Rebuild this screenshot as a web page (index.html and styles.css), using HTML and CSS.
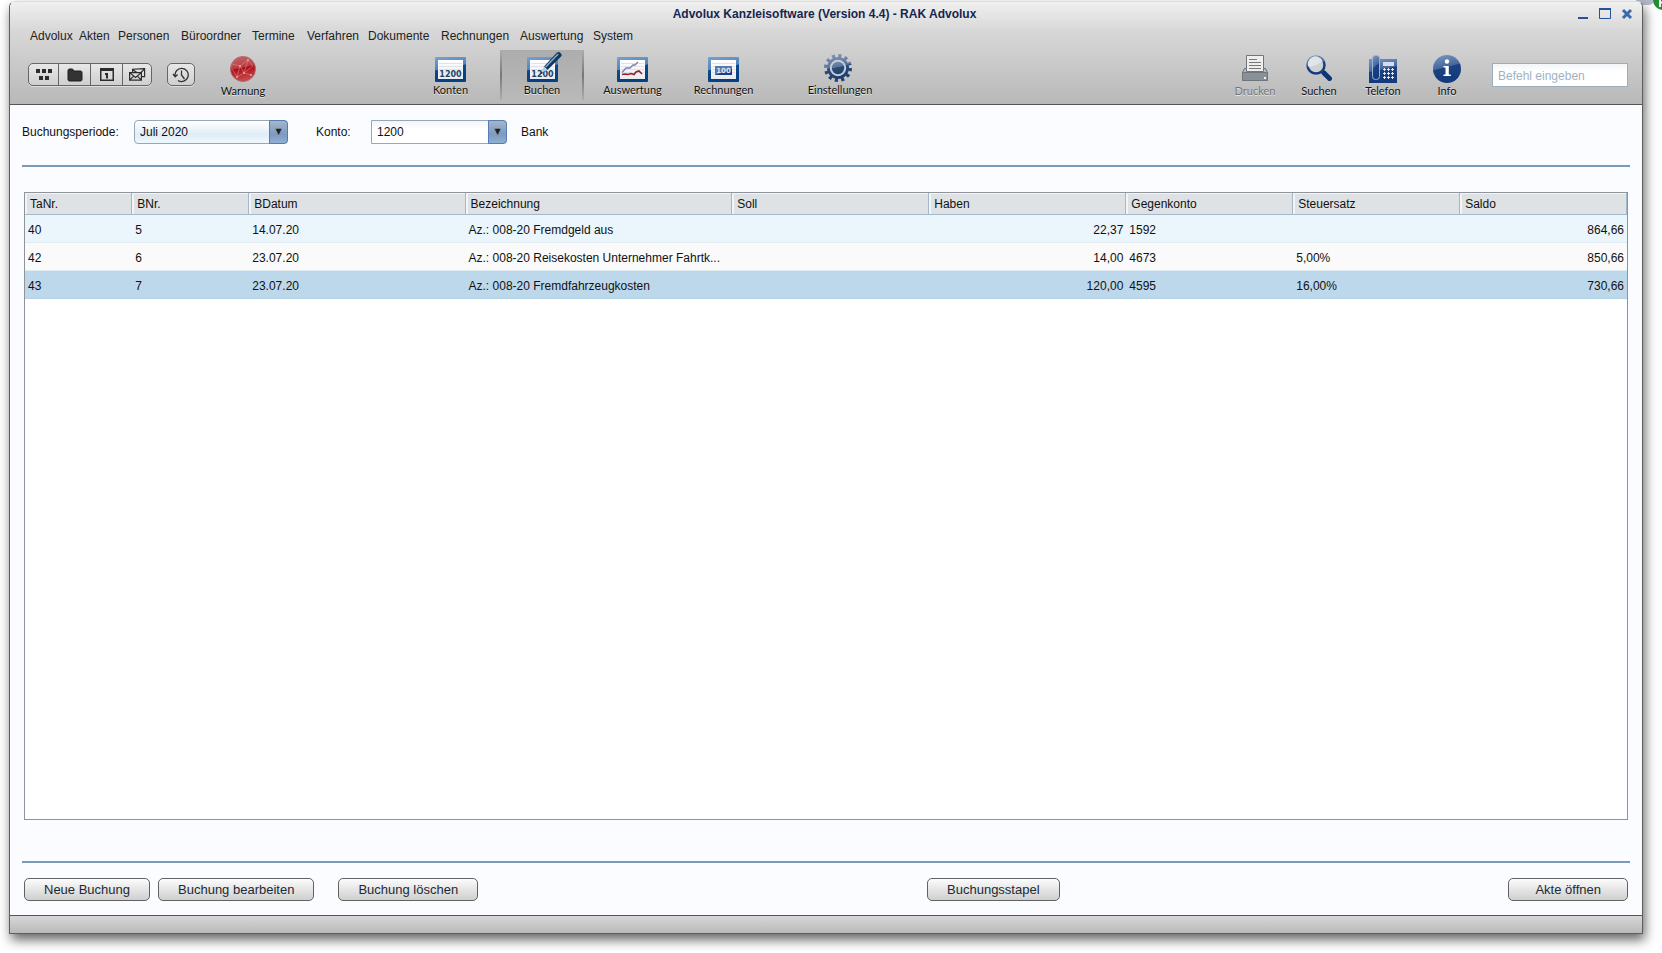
FILE: index.html
```
<!DOCTYPE html>
<html lang="de">
<head>
<meta charset="utf-8">
<title>Advolux Kanzleisoftware (Version 4.4) - RAK Advolux</title>
<link rel="stylesheet" href="styles.css">
</head>
<body>
<svg class="defs" aria-hidden="true">
  <defs>
    <linearGradient id="frame" x1="0" y1="0" x2="0.25" y2="1"><stop offset="0" stop-color="#78a2cf"/><stop offset="0.5" stop-color="#4f83bb"/><stop offset="0.52" stop-color="#0c4a8f"/><stop offset="1" stop-color="#05407f"/></linearGradient>
    <linearGradient id="paper" x1="0" y1="0" x2="0" y2="1"><stop offset="0" stop-color="#ffffff"/><stop offset="1" stop-color="#e9ebef"/></linearGradient>
    <linearGradient id="blue" x1="0" y1="0" x2="0.25" y2="1"><stop offset="0" stop-color="#7d98c2"/><stop offset="0.5" stop-color="#45679f"/><stop offset="0.53" stop-color="#1c4282"/><stop offset="1" stop-color="#123a7c"/></linearGradient>
    <linearGradient id="steel" x1="0" y1="0" x2="0.2" y2="1"><stop offset="0" stop-color="#7b90ad"/><stop offset="0.5" stop-color="#5b7497"/><stop offset="0.53" stop-color="#2d4d78"/><stop offset="1" stop-color="#1f406d"/></linearGradient>
    <linearGradient id="red" x1="0" y1="0" x2="0.2" y2="1"><stop offset="0" stop-color="#c4686c"/><stop offset="0.5" stop-color="#bd3b41"/><stop offset="0.53" stop-color="#a80f17"/><stop offset="1" stop-color="#c8474c"/></linearGradient>
    <g id="card">
      <rect width="31" height="25" rx="1" fill="url(#frame)"/>
      <rect x="3" y="3" width="25" height="19" fill="url(#paper)"/>
      <path d="M4 6.500h23M4 9.500h23M4 12.500h23M4 15.500h23" stroke="#dfe3e8"/>
    </g>
  </defs>
</svg>
<div class="behind" aria-hidden="true"></div>
<svg class="badge" aria-hidden="true" width="9" height="10"><circle cx="10" cy="0" r="10" fill="#1f8f2f"/><path d="M7 0v7M7 2.500h2" stroke="#fff" stroke-width="2"/></svg>
<div class="window">
  <header class="header">
    <div class="titlebar">
      <h1 class="title">Advolux Kanzleisoftware (Version 4.4) - RAK Advolux</h1>
      <div class="controls">
        <button aria-label="Minimieren"><svg width="12" height="12"><path d="M1 10h10" stroke="#24529b" stroke-width="2"/></svg></button>
        <button aria-label="Maximieren"><svg width="12" height="12"><path d="M.5 1.500h11v9H.5z" fill="none" stroke="#24529b"/><path d="M0 1h12" stroke="#24529b" stroke-width="2"/></svg></button>
        <button aria-label="Schließen"><svg width="12" height="12"><path d="M2 2l8 8M10 2l-8 8" stroke="#3a68ac" stroke-width="3"/></svg></button>
      </div>
    </div>
    <nav class="menu">
      <button>Advolux</button><button>Akten</button><button>Personen</button><button>Büroordner</button><button>Termine</button><button>Verfahren</button><button>Dokumente</button><button>Rechnungen</button><button>Auswertung</button><button>System</button>
    </nav>
    <div class="toolbar">
      <div class="segments">
        <button aria-label="Übersicht"><svg width="16" height="12" fill="#2c2c2c"><path d="M0 0h4v4H0zM6 0h4v4H6zM12 0h4v4h-4zM3 7h4v4H3zM9 7h4v4H9z"/></svg></button>
        <button aria-label="Ordner"><svg width="16" height="14"><path d="M1 2.500Q1 1 2.500 1H5.500L7 3H13.500Q15 3 15 4.500V11.500Q15 13 13.500 13H2.500Q1 13 1 11.500z" fill="#333" stroke="#1f1f1f"/></svg></button>
        <button aria-label="Kalender"><svg width="14" height="13" fill="none"><path d="M.75.75h12.500v11.500H.75z" stroke="#2c2c2c" stroke-width="1.500"/><path d="M1 2h12" stroke="#2c2c2c" stroke-width="2"/><path d="M5 6h2v4.500" stroke="#2c2c2c" stroke-width="2"/></svg></button>
        <button aria-label="Post"><svg width="17" height="13" fill="none" stroke="#2c2c2c" stroke-width="1.200"><path d="M.6 4.600h11.800v7.600H.6zM.6 4.600l5.900 4.800 5.900-4.800M.6 12.200l4-4M12.400 12.200l-4-4M3.600 4.400V1.200l12-.6v8h-3M4 2l4 2.500M15.600.8L12 4.500"/></svg></button>
      </div>
      <button class="clock" aria-label="Verlauf"><svg width="18" height="16" fill="none" stroke="#333" stroke-width="1.300"><path d="M3.200 9.500A6.600 6.600 0 1 1 6 13.500M1 7l2.200 2.700L5.600 7.500M9.500 3.500V8l3 4"/></svg></button>
      <button class="tool warn"><svg width="28" height="28"><circle cx="14" cy="14" r="12.500" fill="url(#red)" stroke="#b06a6d"/><path d="M3 9l8 2 8-6 5 6-9 7-7 4-5-8M11 11l4 7 7 2M19 5l-4 13M8 22l3-11" fill="none" stroke="#e2989a" stroke-width=".5"/><g fill="#e6a5a7"><circle cx="11" cy="11" r="1"/><circle cx="19" cy="5" r="1"/><circle cx="15" cy="18" r="1"/><circle cx="8" cy="22" r="1"/><circle cx="22" cy="20" r="1"/></g></svg><span>Warnung</span></button>
      <div class="modules">
        <button class="tool"><svg width="31" height="25"><use href="#card"/><text class="digits" x="15.500" y="20">1200</text></svg><span>Konten</span></button>
        <button class="tool active"><svg class="pen" width="31" height="25"><use href="#card"/><text class="digits" x="15.500" y="20">1200</text><path d="M17 9.500L29.500-4q2-2 4 0t.500 3.500L20.500 13z" fill="#14365a"/><path d="M18 9.500L30.500-3.500l1.200 1L19.200 10.500z" fill="#7fa6c8"/><path d="M14 16l3-6.500 3.500 3.500z" fill="#a9cdec"/><path d="M13 17.500l1.500-3 1.500 1.500z" fill="#222"/></svg><span>Buchen</span></button>
        <button class="tool"><svg width="31" height="25" fill="none"><use href="#card"/><path d="M5 15.500L9 11h4l3-3h2l3-3" stroke="#7c7cb4" stroke-width="1.300"/><path d="M5 17.500l3-.5 3 .5 3-1 3 1 2-2.500 3-1 3 3" stroke="#9c1c26" stroke-width="1.600"/></svg><span>Auswertung</span></button>
        <button class="tool"><svg width="31" height="25"><use href="#card"/><path d="M7 9h17v9H7z" fill="#5877ac"/><path d="M7 18l17-6v6z" fill="#173f86"/><text class="amount" x="15.500" y="16">100</text></svg><span>Rechnungen</span></button>
      </div>
      <button class="tool settings"><svg width="32" height="28"><circle cx="14" cy="14" r="12" fill="none" stroke="url(#steel)" stroke-width="4" stroke-dasharray="3 3.283"/><circle cx="14" cy="14" r="11" fill="url(#steel)"/><circle cx="14" cy="14" r="7.200" fill="url(#steel)" stroke="#c3cddb" stroke-width="2"/></svg><span>Einstellungen</span></button>
      <div class="utilities">
        <button class="tool" disabled><svg width="26" height="26"><path d="M2.500 13.500h21l2 4v8H.5v-8z" fill="#b6babf" stroke="#6f757b"/><path d="M.5 17.500h25v8H.5z" fill="#8a9097" stroke="#6f757b"/><path d="M4.500.5h17v16h-17z" fill="#eee" stroke="#71767c"/><path d="M7 4.500h8M7 7.500h12M7 10.500h12M7 13.500h12" stroke="#777"/><path d="M22 22h2v2h-2z" fill="#eee"/></svg><span>Drucken</span></button>
        <button class="tool"><svg width="26" height="26"><circle cx="10" cy="10" r="8.500" fill="#cdd0d4" stroke="url(#blue)" stroke-width="2.500"/><path d="M2.500 12q8-1 14-6a7.500 7.500 0 0 0-14 6z" fill="#e2e4e7"/><path d="M15.500 15.500l2 2" stroke="#2a4f8a" stroke-width="3"/><path d="M18 18l5.500 5.500" stroke="#0d3773" stroke-width="5" stroke-linecap="round"/></svg><span>Suchen</span></button>
        <button class="tool"><svg width="28" height="28"><path d="M0 4h28v24H0z" fill="url(#blue)"/><path d="M14 7h11v4H14z" fill="#d5deec"/><rect x="3.500" y=".5" width="7" height="24" rx="3" fill="url(#blue)" stroke="#9db3d4"/><path d="M14 14.500h11M14 18.500h11M14 22.500h11M15.500 13v3M19.500 13v3M23.500 13v3M15.500 17v3M19.500 17v3M23.500 17v3M15.500 21v3M19.500 21v3M23.500 21v3" stroke="#dbe5f3" stroke-dasharray="3 1"/></svg><span>Telefon</span></button>
        <button class="tool"><svg width="28" height="28"><circle cx="14" cy="14" r="14" fill="url(#blue)"/><circle cx="14" cy="6.500" r="2.200" fill="#fff"/><path d="M10.500 11h5.300v8.500h2V21H10.500v-1.500h2v-7h-2z" fill="#fff"/></svg><span>Info</span></button>
      </div>
      <input class="command" type="text" placeholder="Befehl eingeben" aria-label="Befehl eingeben">
    </div>
  </header>
  <main class="content">
    <div class="filters">
      <label class="period-label" for="period">Buchungsperiode:</label>
      <div class="combo period"><select id="period"><option>Juli 2020</option></select></div>
      <label class="account-label" for="account">Konto:</label>
      <div class="combo account"><select id="account"><option>1200</option></select></div>
      <span class="bank">Bank</span>
    </div>
    <div class="grid">
      <table>
        <colgroup><col class="c1"><col class="c2"><col class="c3"><col class="c4"><col class="c5"><col class="c5"><col class="c6"><col class="c6"><col></colgroup>
        <thead><tr><th>TaNr.</th><th>BNr.</th><th>BDatum</th><th>Bezeichnung</th><th>Soll</th><th>Haben</th><th>Gegenkonto</th><th>Steuersatz</th><th>Saldo</th></tr></thead>
        <tbody>
          <tr class="odd"><td>40</td><td>5</td><td>14.07.20</td><td>Az.: 008-20 Fremdgeld aus</td><td></td><td class="num">22,37</td><td>1592</td><td></td><td class="num">864,66</td></tr>
          <tr><td>42</td><td>6</td><td>23.07.20</td><td>Az.: 008-20 Reisekosten Unternehmer Fahrtk...</td><td></td><td class="num">14,00</td><td>4673</td><td>5,00%</td><td class="num">850,66</td></tr>
          <tr class="selected"><td>43</td><td>7</td><td>23.07.20</td><td>Az.: 008-20 Fremdfahrzeugkosten</td><td></td><td class="num">120,00</td><td>4595</td><td>16,00%</td><td class="num">730,66</td></tr>
        </tbody>
      </table>
    </div>
    <div class="actions">
      <div class="group"><button>Neue Buchung</button><button>Buchung bearbeiten</button><button class="delete">Buchung löschen</button></div>
      <button>Buchungsstapel</button>
      <div class="group end"><button class="open">Akte öffnen</button></div>
    </div>
  </main>
  <footer class="status"></footer>
</div>
</body>
</html>
```
FILE: styles.css
```
* { box-sizing: border-box; }
body {
  margin: 0;
  height: 100vh;
  padding: 1px 19px 19px 9px;
  background: #fff;
  color: #111;
  font: 12px/16px "Liberation Sans", Arial, sans-serif;
  overflow: hidden;
}
button { font: inherit; color: inherit; border: 0; background: none; padding: 0; }
svg { display: block; flex: none; }
.defs { position: absolute; width: 0; height: 0; }
.behind {
  position: absolute;
  top: -6px;
  right: 8px;
  width: 18px;
  height: 11px;
  border-radius: 5px;
  background: #b4b9c8;
}
.badge { position: absolute; top: 0; right: 0; }
.window {
  position: relative;
  display: flex;
  flex-direction: column;
  height: 100%;
  border: 1px solid #5e5e5e;
  border-top-color: #dcdede;
  border-radius: 6px 6px 0 0;
  background: #fbfcff;
  box-shadow: 2px 6px 12px rgba(0, 0, 0, .6);
}
.header {
  border-bottom: 1px solid #555;
  border-radius: 5px 5px 0 0;
  background: linear-gradient(#f0f0f0, #d8d8d8 28px, #b8b8b8);
}
.titlebar { display: grid; grid-template-columns: 1fr auto 1fr; align-items: center; height: 24px; padding: 0 9px 0 6px; }
.title { grid-column: 2; margin: 0; font-size: 12px; color: #16264f; }
.controls { display: flex; justify-content: flex-end; gap: 10px; }
.menu {
  display: grid;
  grid-template-columns: 49px 39px 63px 71px 55px 61px 73px 79px 73px auto;
  justify-content: start;
  justify-items: start;
  height: 20px;
  padding-left: 20px;
  color: #222;
}
.menu button { height: 20px; padding-bottom: 1px; }
.toolbar { display: flex; align-items: flex-start; height: 58px; padding: 4px 14px 0 18px; }
.segments { display: flex; }
.segments, .clock {
  height: 23px;
  margin-top: 13px;
  border: 1px solid #666;
  border-radius: 5px;
  background: linear-gradient(#e8e8e8, #cfcfcf);
  box-shadow: 0 1px #ddd;
}
.segments button { display: grid; place-items: center; width: 32px; border-right: 1px solid #666; }
.segments button:first-child { width: 30px; }
.segments button:last-child { width: 28px; border: 0; }
.clock { display: grid; place-items: center; width: 28px; margin-left: 15px; }
.tool {
  display: flex;
  flex-direction: column;
  align-items: center;
  justify-content: space-between;
  height: 50px;
  padding: 5px 0 2px;
  font: 11px/14px Lato, "Noto Sans", sans-serif;
  color: #111;
}
.tool span { text-shadow: 0 1px #e4e4e4; }
.tool:disabled { color: #777; }
.warn { width: 64px; margin-left: 16px; }
.modules { display: flex; margin-left: 130px; }
.modules .tool { width: 91px; padding: 7px 0 3px; }
.modules .active {
  width: 84px;
  margin: 0 3px 0 4px;
  border: solid #888;
  border-width: 0 2px;
  border-image: linear-gradient(#b0b0b0, #777, #b0b0b0) 1;
  background: linear-gradient(#adadad, #b9b9b9);
}
.pen { overflow: visible; }
.digits { font: bold 8px "DejaVu Sans", sans-serif; fill: #1c4468; text-anchor: middle; }
.amount { font: bold 7px "DejaVu Sans", sans-serif; fill: #dfe6f2; text-anchor: middle; }
.settings { width: 80px; margin-left: 31px; }
.modules + .settings { padding: 4px 0 3px; }
.utilities { display: flex; margin-left: auto; }
.utilities .tool { width: 64px; }
.command {
  width: 136px;
  height: 24px;
  margin: 13px 0 0 13px;
  padding: 2px 5px 0;
  border: 1px solid #9aaebd;
  background: linear-gradient(#f3f5f8, #fff 8px);
  font: 12px "Liberation Sans", Arial, sans-serif;
}
.command::placeholder { color: #9fb2c4; opacity: 1; }
.content { flex: 1; display: flex; flex-direction: column; padding: 0 12px; }
.filters { display: flex; align-items: center; height: 62px; padding-bottom: 7px; border-bottom: 2px solid #799bb9; }
.combo { position: relative; height: 24px; }
.combo select {
  appearance: none;
  width: 100%;
  height: 100%;
  padding: 0 5px;
  border: 1px solid #98a6ba;
  border-radius: 4px;
  background: linear-gradient(#fff, #e0edf7 60%, #eef8fd);
  color: #111;
  font: inherit;
}
.combo::after {
  content: "▼";
  position: absolute;
  inset: 0 0 0 auto;
  width: 17px;
  border: 1px solid #557cb6;
  border-radius: 0 4px 4px 0;
  background: linear-gradient(#a5b6cb, #7c9bbf 60%, #8fb1d2);
  color: #222;
  font: 8px/22px "DejaVu Sans", sans-serif;
  text-align: center;
  pointer-events: none;
}
.period-label { min-width: 100px; }
.period { width: 154px; margin-left: 12px; }
.account-label { min-width: 35px; margin-left: 28px; }
.account { width: 136px; margin-left: 20px; }
.combo.account select { border-radius: 0 4px 4px 0; background: linear-gradient(#f2f4f6, #fff 8px); }
.bank { margin-left: 14px; }
.grid { flex: 1; margin: 25px 2px 0; border: 1px solid #8f949c; background: #fff; }
table { width: 100%; table-layout: fixed; border-collapse: separate; border-spacing: 0; }
.c1 { width: 6.7%; } .c2 { width: 7.3%; } .c3 { width: 13.5%; } .c4 { width: 16.65%; } .c5 { width: 12.3%; } .c6 { width: 10.42%; }
th {
  height: 22px;
  padding: 0 5px;
  border: solid #a5b8ca;
  border-width: 0 1px 1px 0;
  background: #dee2e5;
  box-shadow: inset 2px 1px #f2f5f7;
  font-weight: normal;
  text-align: left;
}
td { height: 28px; padding: 2px 3px 0; border-bottom: 1px solid #e0ebf2; background: #fafafa; white-space: nowrap; }
.odd td { background: #eaf5fc; }
.selected td { background: #bdd8eb; border-color: #b3d3e7; }
.num { text-align: right; }
.actions {
  display: grid;
  grid-template-columns: 56.3% auto 1fr;
  align-items: center;
  height: 54px;
  margin-top: 41px;
  padding: 1px 2px 0;
  border-top: 2px solid #799bb9;
}
.group { display: flex; gap: 8px; }
.end { justify-content: flex-end; }
.actions button {
  height: 23px;
  padding: 0 19px;
  border: 1px solid #626262;
  border-radius: 5px;
  background: linear-gradient(#fcfcfc, #cfcfcf);
  color: #222a33;
  font-size: 13px;
}
.actions .delete { margin-left: 16px; }
.actions .open { padding: 0 26px; }
.status { height: 18px; border-top: 1px solid #555; background: linear-gradient(#d8d8d8, #b9b9b9); }
```
